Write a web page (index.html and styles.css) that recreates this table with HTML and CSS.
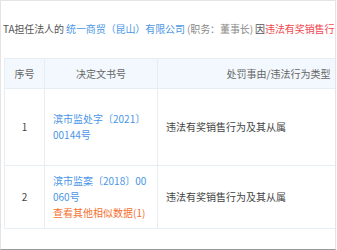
FILE: index.html
```html
<!DOCTYPE html>
<html lang="zh">
<head>
<meta charset="utf-8">
<link rel="stylesheet" href="styles.css">
</head>
<body>
<div class="card">
  <p class="intro">TA担任法人的 <span class="link">统一商贸（昆山）有限公司</span> <span class="muted">(职务：董事长)</span> 因<span class="red">违法有奖销售行为及其从属</span></p>
  <div class="scroller">
    <div class="grid">
      <div class="cell head">序号</div>
      <div class="cell head">决定文书号</div>
      <div class="cell head">处罚事由/违法行为类型</div>

      <div class="cell num">1</div>
      <div class="cell doc"><span class="link">滨市监处字〔2021〕00144号</span></div>
      <div class="cell text">违法有奖销售行为及其从属</div>

      <div class="cell num">2</div>
      <div class="cell doc"><span class="link">滨市监案〔2018〕00060号</span><span class="more">查看其他相似数据(1)</span></div>
      <div class="cell text">违法有奖销售行为及其从属</div>
    </div>
  </div>
</div>
</body>
</html>
```

FILE: styles.css
```css
* { box-sizing: border-box; }
html, body { margin: 0; padding: 0; background: #fff; }
body {
  font-family: "Noto Sans CJK SC", "Noto Sans", sans-serif;
  font-size: 10px;
  line-height: 16px;
  color: #555;
}
.card {
  width: 336px;
  height: 250px;
  border: 1px solid #e4e4e4;
  border-bottom-color: #999;
  overflow: hidden;
  background: #fff;
}
.intro {
  margin: 20px 0 0 2px;
  white-space: nowrap;
  overflow: hidden;
  letter-spacing: -0.1px;
  height: 37px;
}
.link { color: #4a96e6; }
.muted { color: #8a8a8a; }
.red { color: #f0474f; }
.scroller {
  margin-left: 3px;
  overflow: hidden;
}
.grid {
  display: grid;
  grid-template-columns: 40px 113px 242px;
  grid-template-rows: 30px 77px 63px;
  width: 395px;
  border-top: 1px solid #e6edf3;
  border-left: 1px solid #e6edf3;
}
.cell {
  border-right: 1px solid #e6edf3;
  border-bottom: 1px solid #e6edf3;
  display: flex;
  flex-direction: column;
  justify-content: center;
  padding: 0 8px;
  color: #555;
}
.head {
  background: #f2f8fd;
  align-items: center;
  text-align: center;
  color: #666;
}
.num { align-items: center; color: #444; }
.doc { word-break: break-all; }
.more { color: #f3702f; }
.text { color: #444; }
```
